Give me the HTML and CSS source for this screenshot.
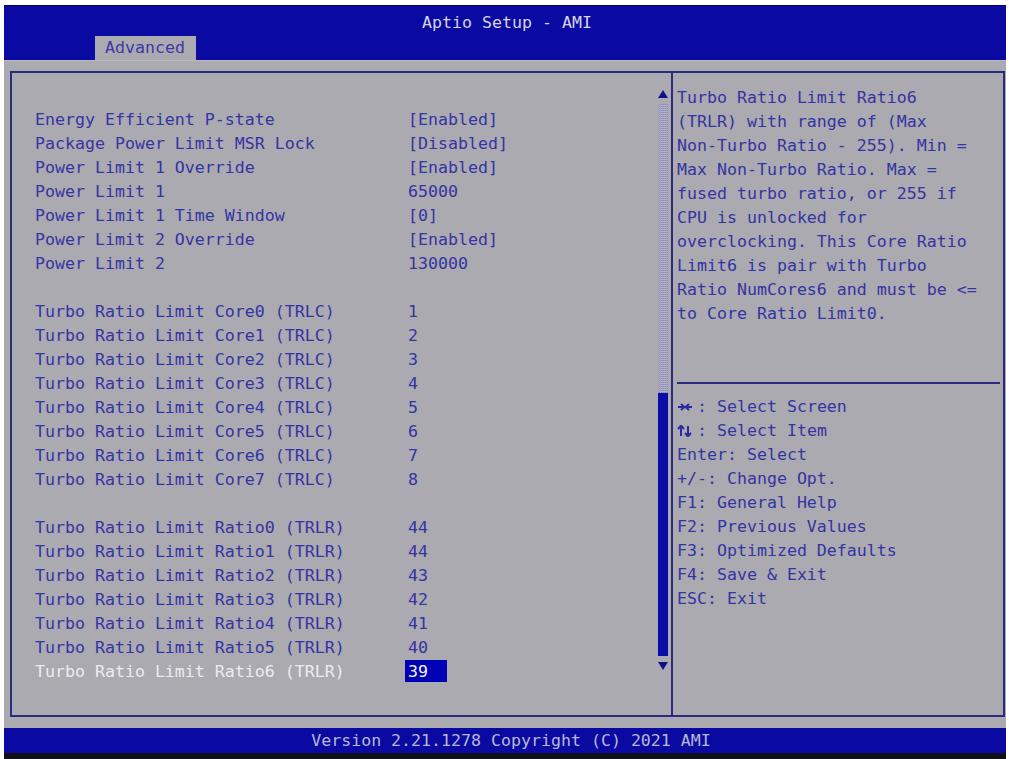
FILE: index.html
```html
<!DOCTYPE html>
<html lang="en">
<head>
    <meta charset="UTF-8">
    <meta name="viewport" content="width=device-width, initial-scale=1.0">
    <title>Aptio Setup - AMI</title>
    <link rel="stylesheet" href="styles.css">
</head>
<body>
    <div class="screen">
        <div class="header">
            <div class="title">Aptio Setup - AMI</div>
            <div class="tabs">
                <div class="tab active">Advanced</div>
            </div>
        </div>

        <div class="main">
            <div class="left-panel">
                <div class="items">
                    <div class="row"><span class="label">Energy Efficient P-state</span><span class="value">[Enabled]</span></div>
                    <div class="row"><span class="label">Package Power Limit MSR Lock</span><span class="value">[Disabled]</span></div>
                    <div class="row"><span class="label">Power Limit 1 Override</span><span class="value">[Enabled]</span></div>
                    <div class="row"><span class="label">Power Limit 1</span><span class="value">65000</span></div>
                    <div class="row"><span class="label">Power Limit 1 Time Window</span><span class="value">[0]</span></div>
                    <div class="row"><span class="label">Power Limit 2 Override</span><span class="value">[Enabled]</span></div>
                    <div class="row"><span class="label">Power Limit 2</span><span class="value">130000</span></div>
                    <div class="row blank"></div>
                    <div class="row"><span class="label">Turbo Ratio Limit Core0 (TRLC)</span><span class="value">1</span></div>
                    <div class="row"><span class="label">Turbo Ratio Limit Core1 (TRLC)</span><span class="value">2</span></div>
                    <div class="row"><span class="label">Turbo Ratio Limit Core2 (TRLC)</span><span class="value">3</span></div>
                    <div class="row"><span class="label">Turbo Ratio Limit Core3 (TRLC)</span><span class="value">4</span></div>
                    <div class="row"><span class="label">Turbo Ratio Limit Core4 (TRLC)</span><span class="value">5</span></div>
                    <div class="row"><span class="label">Turbo Ratio Limit Core5 (TRLC)</span><span class="value">6</span></div>
                    <div class="row"><span class="label">Turbo Ratio Limit Core6 (TRLC)</span><span class="value">7</span></div>
                    <div class="row"><span class="label">Turbo Ratio Limit Core7 (TRLC)</span><span class="value">8</span></div>
                    <div class="row blank"></div>
                    <div class="row"><span class="label">Turbo Ratio Limit Ratio0 (TRLR)</span><span class="value">44</span></div>
                    <div class="row"><span class="label">Turbo Ratio Limit Ratio1 (TRLR)</span><span class="value">44</span></div>
                    <div class="row"><span class="label">Turbo Ratio Limit Ratio2 (TRLR)</span><span class="value">43</span></div>
                    <div class="row"><span class="label">Turbo Ratio Limit Ratio3 (TRLR)</span><span class="value">42</span></div>
                    <div class="row"><span class="label">Turbo Ratio Limit Ratio4 (TRLR)</span><span class="value">41</span></div>
                    <div class="row"><span class="label">Turbo Ratio Limit Ratio5 (TRLR)</span><span class="value">40</span></div>
                    <div class="row selected"><span class="label">Turbo Ratio Limit Ratio6 (TRLR)</span><span class="value">39</span></div>
                </div>
                <div class="scrollbar">
                    <div class="arrow-up"></div>
                    <div class="track"></div>
                    <div class="thumb"></div>
                    <div class="arrow-down"></div>
                </div>
            </div>

            <div class="right-panel">
                <div class="help">
                    <p>Turbo Ratio Limit Ratio6</p>
                    <p>(TRLR) with range of (Max</p>
                    <p>Non-Turbo Ratio - 255). Min =</p>
                    <p>Max Non-Turbo Ratio. Max =</p>
                    <p>fused turbo ratio, or 255 if</p>
                    <p>CPU is unlocked for</p>
                    <p>overclocking. This Core Ratio</p>
                    <p>Limit6 is pair with Turbo</p>
                    <p>Ratio NumCores6 and must be &lt;=</p>
                    <p>to Core Ratio Limit0.</p>
                </div>
                <div class="divider"></div>
                <div class="keys">
                    <p><svg class="arr" width="20" height="12" viewBox="0 0 20 12"><path d="M1 6H7M4 3L7.5 6L4 9M15 6H9M12 3L8.5 6L12 9" fill="none" stroke="#2a2aa4" stroke-width="2"/></svg>: Select Screen</p>
                    <p><svg class="arr" width="20" height="12" viewBox="0 0 20 12"><path d="M4 11V1M1 4L4 0.5L7 4M11 1V11M8 8L11 11.5L14 8" fill="none" stroke="#2a2aa4" stroke-width="2"/></svg>: Select Item</p>
                    <p>Enter: Select</p>
                    <p>+/-: Change Opt.</p>
                    <p>F1: General Help</p>
                    <p>F2: Previous Values</p>
                    <p>F3: Optimized Defaults</p>
                    <p>F4: Save &amp; Exit</p>
                    <p>ESC: Exit</p>
                </div>
            </div>
        </div>

        <div class="footer">Version 2.21.1278 Copyright (C) 2021 AMI</div>
    </div>
</body>
</html>
```

FILE: styles.css
```css
body {
    margin: 0;
    background: #ffffff;
    font-family: "DejaVu Sans Mono", "Liberation Mono", monospace;
    font-size: 16.6px;
    color: #3434a4;
}
p {
    margin: 0;
}
.screen {
    margin: 5px 3px 0 4px;
    height: 754px;
    box-sizing: border-box;
    display: flex;
    flex-direction: column;
    background: #aaaab0;
    border-bottom: 6px solid #101018;
}
.header {
    height: 55px;
    background: #0a0aa2;
    border-top: 1px solid #05054a;
    box-sizing: border-box;
    display: flex;
    flex-direction: column;
    justify-content: space-between;
}
.title {
    text-align: center;
    color: #d4d4e4;
    line-height: 24px;
    padding-top: 5px;
    padding-left: 4px;
}
.tabs {
    display: flex;
    padding-left: 91px;
}
.tab {
    background: #aaaab0;
    color: #3a3aa8;
    width: 101px;
    height: 24px;
    line-height: 23px;
    padding-left: 10px;
    box-sizing: border-box;
}
.main {
    flex: 1;
    display: flex;
    padding: 10px 0 11px 6px;
    border-top: 1px solid #b8b8c0;
}
.left-panel {
    width: 663px;
    box-sizing: border-box;
    border: 2px solid #2a2a80;
    display: flex;
}
.items {
    width: 646px;
    padding: 35px 0 0 23px;
    box-sizing: border-box;
}
.row {
    display: flex;
    height: 24px;
    line-height: 24px;
    white-space: pre;
}
.label {
    width: 370px;
}
.value {
    padding-left: 3px;
}
.row.selected .label {
    color: #ececf0;
}
.row.selected .value {
    background: #0000b4;
    color: #f4f4f8;
    width: 42px;
    height: 22px;
    line-height: 24px;
    box-sizing: border-box;
}
.scrollbar {
    width: 10px;
    margin-top: 17px;
    display: flex;
    flex-direction: column;
    align-items: center;
}
.arrow-up {
    width: 0;
    height: 0;
    border-left: 5px solid transparent;
    border-right: 5px solid transparent;
    border-bottom: 8px solid #10108c;
    margin-bottom: 6px;
}
.track {
    width: 10px;
    height: 289px;
    background:
        repeating-linear-gradient(90deg, rgba(170, 170, 176, 0.6) 0 1px, transparent 1px 2px),
        repeating-linear-gradient(0deg, #8c8cc4 0 1px, #b4b4c8 1px 2px);
}
.thumb {
    width: 10px;
    height: 263px;
    background: #0c0ca6;
}
.arrow-down {
    width: 0;
    height: 0;
    border-left: 5px solid transparent;
    border-right: 5px solid transparent;
    border-top: 8px solid #10108c;
    margin-top: 6px;
}
.right-panel {
    width: 332px;
    box-sizing: border-box;
    border: 2px solid #2a2a80;
    border-left: none;
    display: flex;
    flex-direction: column;
}
.help {
    height: 309px;
    padding: 13px 0 0 4px;
    box-sizing: border-box;
}
.help p, .keys p {
    height: 24px;
    line-height: 24px;
    white-space: pre;
}
.divider {
    height: 2px;
    margin: 0 3px 0 4px;
    background: #2a2a80;
}
.keys {
    padding: 11px 0 0 4px;
}
.arr {
    vertical-align: -1px;
}
.footer {
    height: 25px;
    line-height: 26px;
    background: #0a0aa2;
    color: #b8b8d4;
    text-align: center;
    padding-left: 12px;
}
```
